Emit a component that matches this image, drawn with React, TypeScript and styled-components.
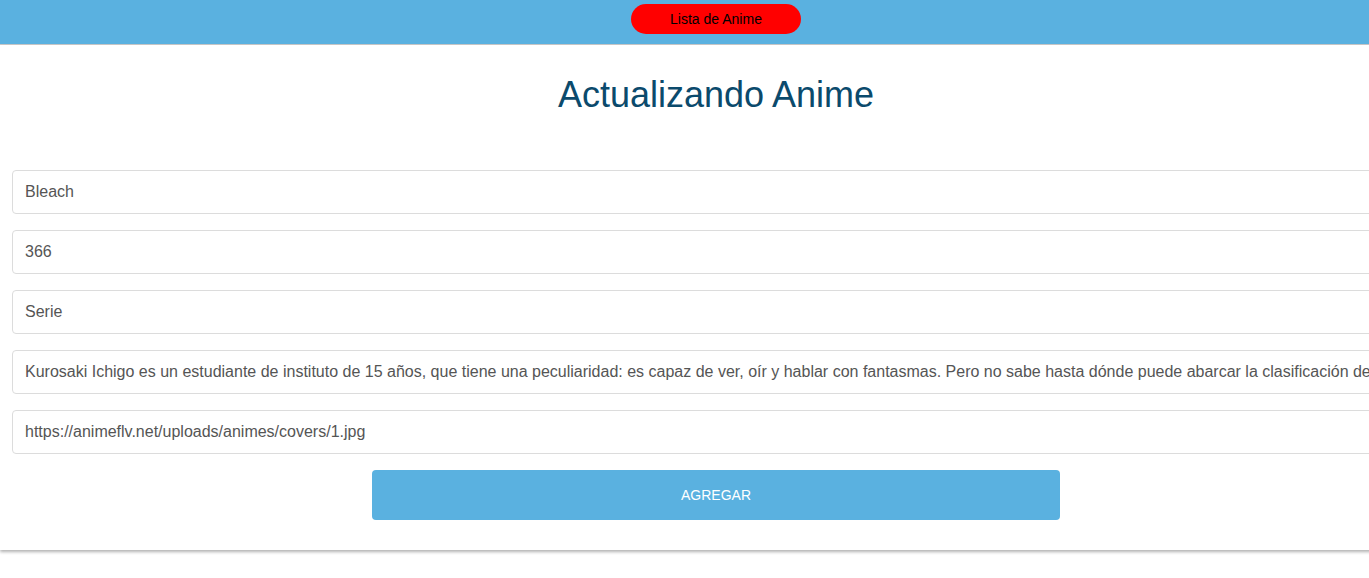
import React from "react";
import styled, { createGlobalStyle } from "styled-components";

const Global = createGlobalStyle`
  html, body { margin: 0; padding: 0; background: #fff; overflow: hidden; }
  body { font-family: "Liberation Sans", Arial, sans-serif; }
  * { box-sizing: border-box; }
`;

const Page = styled.div`
  width: 1432px;
  padding-bottom: 10px;
`;

const Header = styled.header`
  height: 45px;
  background: #5ab1e0;
  border-bottom: 1px solid #c9c9c9;
  display: flex;
  justify-content: center;
  align-items: flex-start;
  padding-top: 4px;
`;

const Pill = styled.button`
  width: 170px;
  height: 30px;
  border: none;
  border-radius: 15px;
  background: #ff0000;
  color: #000;
  font-family: "Liberation Sans", Arial, sans-serif;
  font-size: 14px;
  cursor: pointer;
`;

const Card = styled.main`
  background: #fff;
  box-shadow: 0 2px 3px rgba(0, 0, 0, 0.3);
  padding: 28px 12px 30px;
  display: flex;
  flex-direction: column;
`;

const Title = styled.h1`
  margin: 0 0 53px;
  text-align: center;
  font-weight: 400;
  font-size: 36px;
  line-height: 44px;
  color: #0b4a6c;
`;

const Form = styled.form`
  display: flex;
  flex-direction: column;
  gap: 16px;
`;

const Input = styled.input`
  width: 100%;
  height: 44px;
  border: 1px solid #dcdcdc;
  border-radius: 4px;
  padding: 0 12px;
  font-family: "Liberation Sans", Arial, sans-serif;
  font-size: 16px;
  color: #555;
  background: #fff;
  outline: none;
`;

const Submit = styled.button`
  align-self: center;
  width: 688px;
  height: 50px;
  border: none;
  border-radius: 4px;
  background: #5ab1e0;
  color: #fff;
  font-family: "Liberation Sans", Arial, sans-serif;
  font-size: 14px;
  text-transform: uppercase;
  cursor: pointer;
`;

export default function App() {
  return (
    <>
      <Global />
      <Page>
        <Header>
          <Pill>Lista de Anime</Pill>
        </Header>
        <Card>
          <Title>Actualizando Anime</Title>
          <Form onSubmit={(e) => e.preventDefault()}>
            <Input defaultValue="Bleach" />
            <Input defaultValue="366" />
            <Input defaultValue="Serie" />
            <Input defaultValue="Kurosaki Ichigo es un estudiante de instituto de 15 años, que tiene una peculiaridad: es capaz de ver, oír y hablar con fantasmas. Pero no sabe hasta dónde puede abarcar la clasificación de los espíritus." />
            <Input defaultValue="https://animeflv.net/uploads/animes/covers/1.jpg" />
            <Submit type="submit">Agregar</Submit>
          </Form>
        </Card>
      </Page>
    </>
  );
}
